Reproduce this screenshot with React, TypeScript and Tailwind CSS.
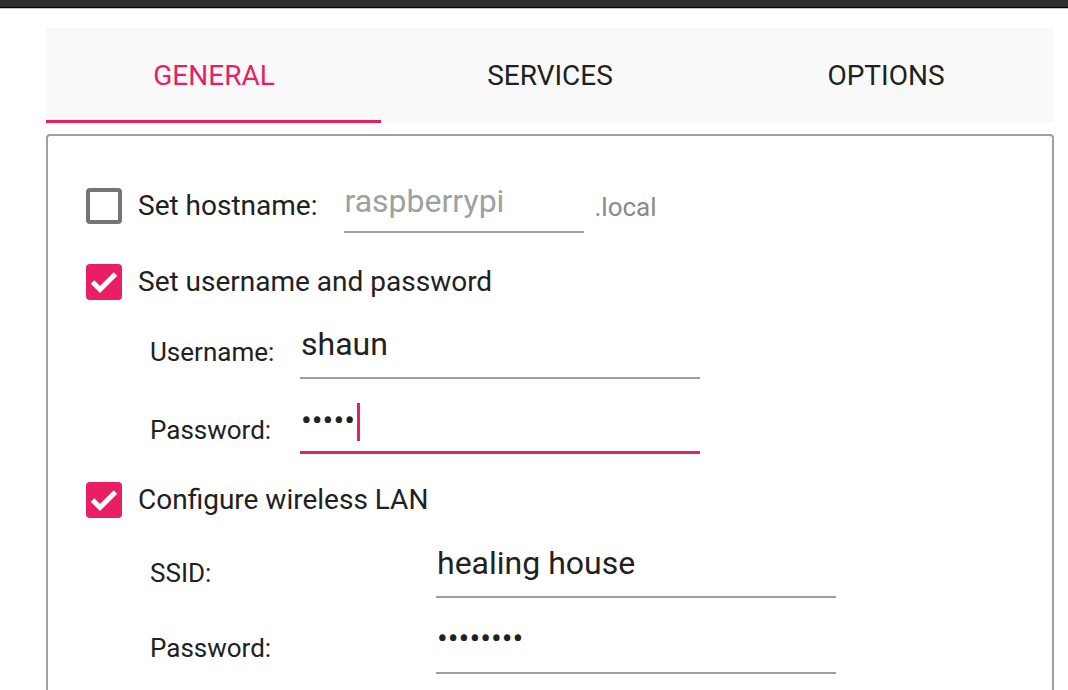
import React from "react";

function CheckBox({ checked }: { checked: boolean }) {
  if (!checked) {
    return (
      <div className="w-[36px] h-[36px] shrink-0 rounded-[4px] border-[4px] border-[#757575] bg-white" />
    );
  }
  return (
    <div className="w-[36px] h-[36px] shrink-0 rounded-[4px] bg-[#e91e63] flex items-center justify-center">
      <svg width="36" height="36" viewBox="0 0 36 36">
        <polyline
          points="6.5,18 14,25.5 29.5,10"
          fill="none"
          stroke="#ffffff"
          strokeWidth="5"
        />
      </svg>
    </div>
  );
}

function Field({
  label,
  labelWidth,
  labelPad,
  value,
  valueLead,
  focused,
}: {
  label: string;
  labelWidth: string;
  labelPad: string;
  value: string;
  valueLead: string;
  focused?: boolean;
}) {
  return (
    <div className="flex items-start">
      <div className={`${labelWidth} ${labelPad} shrink-0 text-[26px] leading-[28px] text-[#212121]`}>
        {label}
      </div>
      <div
        className={
          focused
            ? "w-[400px] h-[58px] border-b-[3px] border-[#e91e63] flex items-start"
            : "w-[400px] h-[59px] border-b-2 border-[#a0a0a0] flex items-start"
        }
      >
        <span className={`pl-[1px] text-[32px] ${valueLead} text-[#212121]`}>{value}</span>
        {focused && <span className="mt-[7px] ml-[2px] w-[3px] h-[38px] bg-[#e91e63]" />}
      </div>
    </div>
  );
}

export default function App() {
  return (
    <div
      className="w-[1068px] h-[690px] overflow-hidden bg-white"
      style={{ fontFamily: "Roboto, 'Liberation Sans', sans-serif" }}
    >
      {/* window chrome */}
      <div className="h-[7px] bg-[#2d2c31]" />
      <div className="h-[1px] bg-[#050505]" />
      <div className="h-[1px] bg-[#c4c4c4]" />

      <div className="px-[46px] pr-[14px] pt-[19px]">
        {/* tabs */}
        <div className="flex h-[95px] bg-[#f9f9f9]">
          <div className="w-[336px] flex flex-col">
            <div className="flex-1 flex items-center justify-center pt-[3px] text-[28px] text-[#e91e63]">
              GENERAL
            </div>
            <div className="h-[3px] w-[335px] bg-[#e91e63]" />
          </div>
          <div className="w-[336px] flex items-center justify-center pt-[1px] text-[28px] text-[#212121]">
            SERVICES
          </div>
          <div className="w-[336px] flex items-center justify-center pt-[1px] text-[28px] text-[#212121]">
            OPTIONS
          </div>
        </div>

        {/* panel */}
        <div className="mt-[11px] h-[600px] border-2 border-[#a0a0a0] rounded-[4px] pt-[52px] pl-[38px]">
          <div className="flex items-start">
            <CheckBox checked={false} />
            <div className="ml-[16px] h-[36px] flex items-center text-[28px] text-[#212121]">
              Set hostname:
            </div>
            <div className="ml-[27px] w-[240px] h-[45px] border-b-2 border-[#a0a0a0] text-[32px] leading-[26px] text-[#a0a0a0]">
              raspberrypi
            </div>
            <div className="ml-[10px] text-[26px] leading-[38px] text-[#8a8a8a]">.local</div>
          </div>

          <div className="mt-[31px] flex items-center">
            <CheckBox checked />
            <div className="ml-[16px] text-[28px] leading-[36px] text-[#212121]">
              Set username and password
            </div>
          </div>

          <div className="ml-[64px] mt-[20px] flex flex-col gap-[17px]">
            <Field
              label="Username:"
              labelWidth="w-[150px]"
              labelPad="pt-[18px]"
              value="shaun"
              valueLead="leading-[49px]"
            />
            <Field
              label="Password:"
              labelWidth="w-[150px]"
              labelPad="pt-[20px]"
              value="•••••"
              valueLead="leading-[48px]"
              focused
            />
          </div>

          <div className="mt-[28px] flex items-center">
            <CheckBox checked />
            <div className="ml-[16px] text-[28px] leading-[36px] text-[#212121]">
              Configure wireless LAN
            </div>
          </div>

          <div className="ml-[64px] mt-[21px] flex flex-col gap-[17px]">
            <Field
              label="SSID:"
              labelWidth="w-[286px]"
              labelPad="pt-[20px]"
              value="healing house"
              valueLead="leading-[48px]"
            />
            <Field
              label="Password:"
              labelWidth="w-[286px]"
              labelPad="pt-[19px]"
              value="••••••••"
              valueLead="leading-[46px]"
            />
          </div>
        </div>
      </div>
    </div>
  );
}
